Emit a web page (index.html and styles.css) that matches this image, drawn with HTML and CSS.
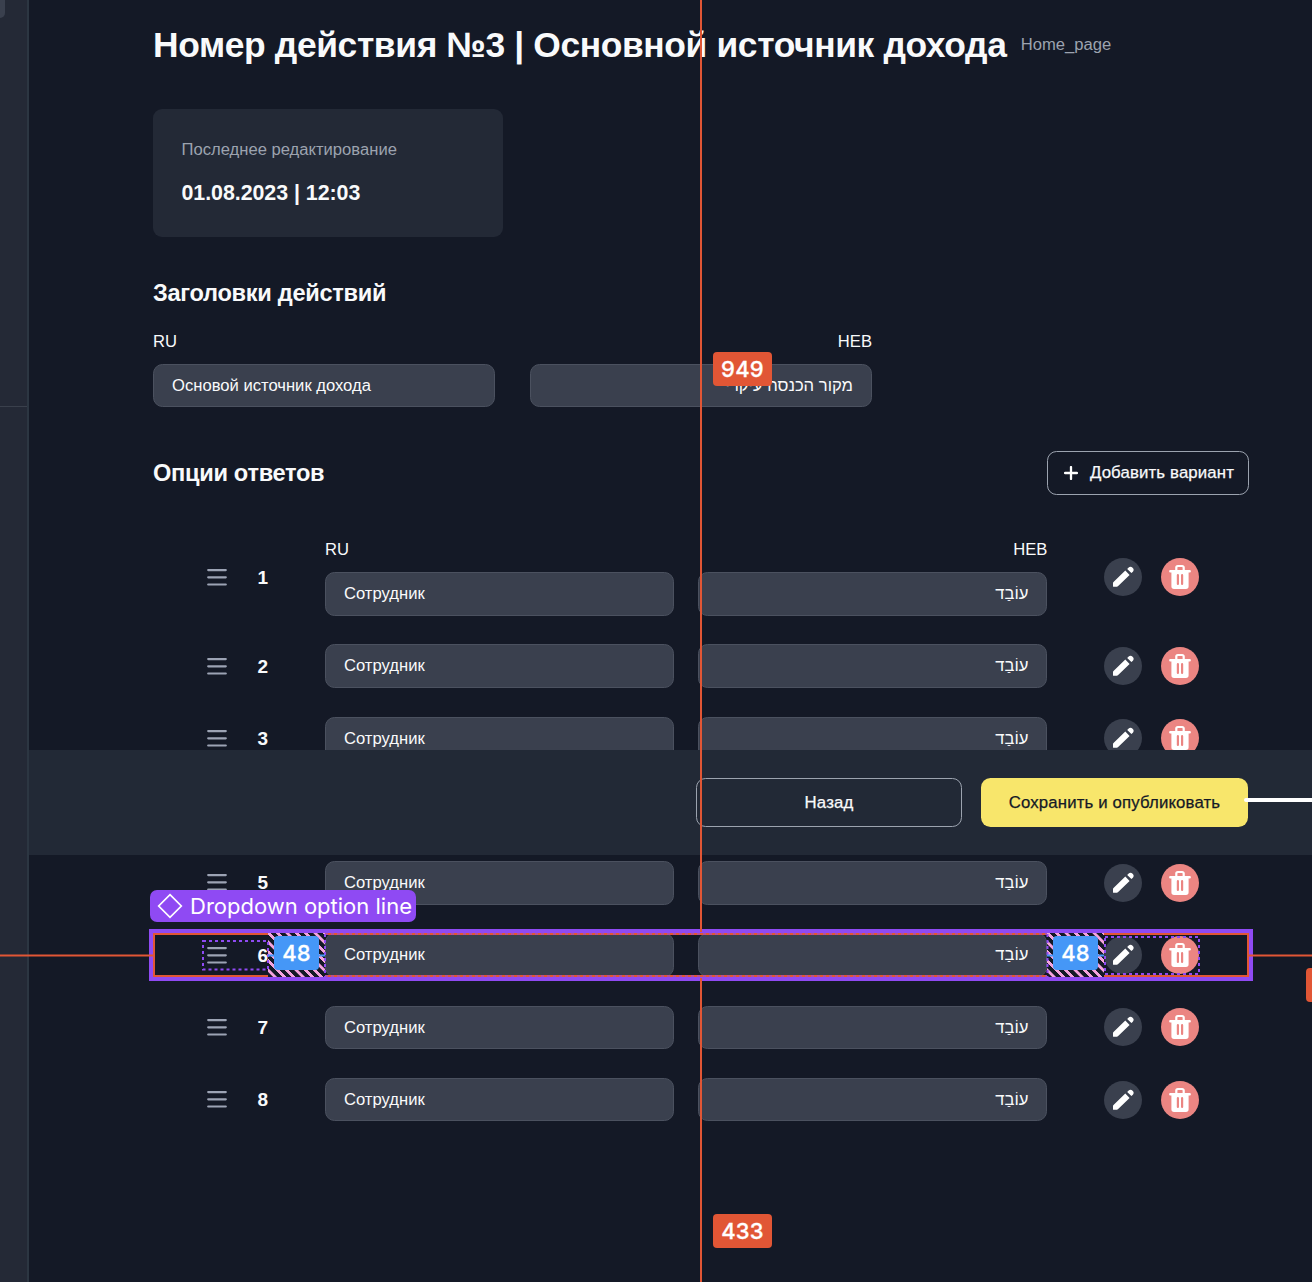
FILE: index.html
```html
<!DOCTYPE html>
<html lang="ru">
<head>
<meta charset="utf-8">
<title>Номер действия №3</title>
<link rel="stylesheet" href="styles.css">
</head>
<body>
<svg class="sprite" width="0" height="0" aria-hidden="true">
  <symbol id="drag" viewBox="0 0 29 29"><path d="M6.200 7.100H23.800M6.200 14.300H23.800M6.200 21.500H23.800" fill="none" stroke="#9ca3b4" stroke-width="2.2" stroke-linecap="round"/></symbol>
  <symbol id="pencil" viewBox="0 0 38 38"><path d="M9 25.100a1.600 1.600 0 0 1 .5-1.100L21.300 12.600l4.300 4.300L13.900 28.300a1.600 1.600 0 0 1-1.100.5H9.600a.6.6 0 0 1-.6-.6zM23.200 10.900l1.200-1.200a2.950 2.950 0 0 1 4.200 4.200l-1.200 1.200z" fill="#fff"/></symbol>
  <symbol id="trash" viewBox="0 0 38 38"><path d="M15.300 12.500V9.500A1.500 1.500 0 0 1 16.800 8h4.400a1.500 1.500 0 0 1 1.500 1.500v3" fill="none" stroke="#fff" stroke-width="2.200"/><path d="M9.300 12H28.700a1.200 1.200 0 0 1 0 2.400h-1.100V28.300A2.700 2.700 0 0 1 24.900 31H13.100a2.700 2.700 0 0 1-2.700-2.700V14.400H9.300a1.200 1.200 0 0 1 0-2.400z" fill="#fff"/><path d="M16.900 17.200V26M21.100 17.200V26" stroke="#eb8582" stroke-width="2.200" stroke-linecap="round"/></symbol>
</svg>
<div class="app">
  <aside class="sidebar">
    <div class="sidebar-top"><div class="sidebar-chip"></div></div>
  </aside>
  <main class="main">
    <header class="title-row">
      <h1>Номер действия №3 | Основной источник дохода</h1>
      <span class="page-name">Home_page</span>
    </header>
    <section class="card">
      <p class="card-label">Последнее редактирование</p>
      <p class="card-date">01.08.2023 | 12:03</p>
    </section>
    <h2 class="section-title">Заголовки действий</h2>
    <div class="headings">
      <label class="field"><span class="label">RU</span><span class="input">Основой источник дохода</span></label>
      <label class="field heb"><span class="label">HEB</span><span class="input"><bdi>מקור הכנסה עיקרי</bdi></span></label>
    </div>
    <div class="options-head">
      <h2>Опции ответов</h2>
      <button class="btn add"><svg width="14" height="14" viewBox="0 0 14 14"><path d="M7 1.100V12.900M1.100 7H12.900" stroke="#fff" stroke-width="2.3" stroke-linecap="round"/></svg>Добавить вариант</button>
    </div>
    <div class="options">
      <div class="option">
        <div class="handle"><svg class="drag"><use href="#drag"/></svg><b>1</b></div>
        <div class="pair">
          <label class="field"><span class="label">RU</span><span class="input">Сотрудник</span></label>
          <label class="field heb"><span class="label">HEB</span><span class="input"><bdi>עוֹבַד</bdi></span></label>
        </div>
        <div class="actions"><button class="round"><svg><use href="#pencil"/></svg></button><button class="round danger"><svg><use href="#trash"/></svg></button></div>
      </div>
      <div class="option">
        <div class="handle"><svg class="drag"><use href="#drag"/></svg><b>2</b></div>
        <div class="pair"><span class="input">Сотрудник</span><span class="input heb"><bdi>עוֹבַד</bdi></span></div>
        <div class="actions"><button class="round"><svg><use href="#pencil"/></svg></button><button class="round danger"><svg><use href="#trash"/></svg></button></div>
      </div>
      <div class="option">
        <div class="handle"><svg class="drag"><use href="#drag"/></svg><b>3</b></div>
        <div class="pair"><span class="input">Сотрудник</span><span class="input heb"><bdi>עוֹבַד</bdi></span></div>
        <div class="actions"><button class="round"><svg><use href="#pencil"/></svg></button><button class="round danger"><svg><use href="#trash"/></svg></button></div>
      </div>
      <div class="option covered"></div>
      <div class="option">
        <div class="handle"><svg class="drag"><use href="#drag"/></svg><b>5</b></div>
        <div class="pair"><span class="input">Сотрудник</span><span class="input heb"><bdi>עוֹבַד</bdi></span></div>
        <div class="actions"><button class="round"><svg><use href="#pencil"/></svg></button><button class="round danger"><svg><use href="#trash"/></svg></button></div>
      </div>
      <div class="option">
        <div class="handle"><svg class="drag"><use href="#drag"/></svg><b>6</b></div>
        <div class="pair"><span class="input">Сотрудник</span><span class="input heb"><bdi>עוֹבַד</bdi></span></div>
        <div class="actions"><button class="round"><svg><use href="#pencil"/></svg></button><button class="round danger"><svg><use href="#trash"/></svg></button></div>
      </div>
      <div class="option">
        <div class="handle"><svg class="drag"><use href="#drag"/></svg><b>7</b></div>
        <div class="pair"><span class="input">Сотрудник</span><span class="input heb"><bdi>עוֹבַד</bdi></span></div>
        <div class="actions"><button class="round"><svg><use href="#pencil"/></svg></button><button class="round danger"><svg><use href="#trash"/></svg></button></div>
      </div>
      <div class="option">
        <div class="handle"><svg class="drag"><use href="#drag"/></svg><b>8</b></div>
        <div class="pair"><span class="input">Сотрудник</span><span class="input heb"><bdi>עוֹבַד</bdi></span></div>
        <div class="actions"><button class="round"><svg><use href="#pencil"/></svg></button><button class="round danger"><svg><use href="#trash"/></svg></button></div>
      </div>
    </div>
  </main>
  <footer class="savebar">
    <button class="btn back">Назад</button>
    <button class="btn save">Сохранить и опубликовать</button>
  </footer>
  <div class="connector"></div>
  <div class="selection"></div>
  <div class="gap-hatch gap-left"></div>
  <div class="gap-hatch gap-right"></div>
  <svg class="guides" width="1312" height="1282" viewBox="0 0 1312 1282" fill="none">
    <g stroke="#8f4af3" stroke-width="2" stroke-dasharray="3 3">
      <rect x="203" y="941" width="65" height="28.5"/>
      <rect x="1105" y="937" width="94" height="37"/>
      <path d="M325 934H1047M325 976H1047" stroke-width="1.2"/>
      <path d="M325 934V977M1047.500 934V977"/>
    </g>
    <path d="M701 0V932M701 978V1282M0 955.500H153M1249 955.500H1312" stroke="#e15635" stroke-width="2"/>
    <path d="M268 955.500H325M1047 955.500H1104" stroke="#4597f7" stroke-width="2"/>
  </svg>
  <div class="tag tag-949">949</div>
  <div class="tag tag-433">433</div>
  <div class="tag tag-edge"></div>
  <div class="tag blue tag-left">48</div>
  <div class="tag blue tag-right">48</div>
  <div class="component-name"><svg width="26" height="26" viewBox="0 0 26 26"><path d="M13 1.700L24.300 13L13 24.300L1.700 13Z" fill="none" stroke="#fff" stroke-width="1.700"/></svg>Dropdown option line</div>
</div>
</body>
</html>
```

FILE: styles.css
```css
* { box-sizing: border-box; }
body { margin: 0; background: #141926; color: #f9fafb; font-family: "Liberation Sans", Arial, sans-serif; font-size: 16.620px; }
h1, h2, p { margin: 0; }
button { font: inherit; color: inherit; padding: 0; border: 0; background: none; }
.sprite { position: absolute; }
.app { position: relative; display: flex; width: 1312px; height: 1282px; overflow: hidden; }
.sidebar { width: 29px; flex: none; background: #242936; border-right: 2px solid #2c3642; }
.sidebar-top { height: 407px; border-bottom: 1px solid #3a404c; }
.sidebar-chip { width: 5px; height: 18px; background: #3a404e; border-radius: 0 0 5px 0; }
.main { width: 1220px; padding: 21px 0 0 124px; flex: none; }
.title-row { display: flex; align-items: center; gap: 14.300px; height: 48px; }
h1 { font-size: 35.400px; font-weight: 700; line-height: 48px; letter-spacing: -.37px; white-space: nowrap; }
.page-name { color: #9ca3af; line-height: 24px; }
.card { width: 350px; height: 128px; margin-top: 40px; padding: 29px 28.500px; background: #232936; border-radius: 9px; display: flex; flex-direction: column; gap: 16px; }
.card-label { color: #9ca3af; line-height: 24px; }
.card-date { font-size: 21.400px; font-weight: 700; line-height: 30px; letter-spacing: -.05px; }
h2 { font-size: 23.600px; font-weight: 700; line-height: 32px; letter-spacing: -.3px; }
.section-title { margin-top: 40px; }
.headings { display: grid; grid-template-columns: 342px 342px; column-gap: 35px; margin-top: 20.500px; }
.field { display: flex; flex-direction: column; gap: 10px; }
.label { line-height: 24px; }
.field.heb .label { text-align: right; }
.input { display: block; height: 43.500px; padding: 0 18px; line-height: 42px; background: #3a404e; border: 1px solid #4b515f; border-radius: 9.500px; }
.heb .input, .input.heb { text-align: right; }
.options-head { display: flex; justify-content: space-between; align-items: center; width: 1096px; margin-top: 44px; }
.btn { display: flex; align-items: center; justify-content: center; border: 1.200px solid #9ca3af; border-radius: 9.500px; font-size: 16.800px; letter-spacing: .14px; -webkit-text-stroke: .25px; }
.add { width: 202px; height: 44px; gap: 12px; padding-left: 2px; }
.options { display: flex; flex-direction: column; gap: 28.900px; margin-top: 43.500px; width: 1096px; }
.option { display: flex; align-items: center; height: 43.360px; padding-left: 49px; }
.option:first-child { height: 77px; }
.handle { display: flex; align-items: center; justify-content: space-between; width: 66px; margin-right: 57px; }
.handle b { font-size: 19px; font-weight: 700; line-height: 28px; padding-top: 1px; }
.drag { width: 29px; height: 29px; display: block; }
.pair { display: grid; grid-template-columns: 349px 349px; column-gap: 24.400px; margin-right: 57px; }
.actions { display: flex; gap: 19px; }
.round { width: 38px; height: 38px; border-radius: 50%; background: #3a404e; }
.round svg { display: block; width: 38px; height: 38px; }
.danger { background: #eb8582; }
.savebar { position: absolute; left: 29px; right: 0; top: 750px; height: 105px; padding-right: 64px; display: flex; align-items: center; justify-content: flex-end; gap: 19px; background: #222936; }
.back { width: 266px; height: 49px; }
.save { width: 267px; height: 49px; background: #f8e66b; border: 0; color: #141926; }
.connector { position: absolute; left: 1244px; top: 798px; width: 80px; height: 4px; border-radius: 2px; background: #fff; }
.selection { position: absolute; left: 149px; top: 929px; width: 1104px; height: 52px; border: 4px solid #8f4af3; }
.selection::before { content: ""; box-sizing: border-box; display: block; height: 44px; border: 2px solid #e15635; }
.gap-hatch { position: absolute; top: 933px; width: 57px; height: 44px; background: repeating-linear-gradient(45deg, #141926 0 3.400px, #f5a3dd 3.800px 6.200px, #141926 6.600px); }
.gap-left { left: 268px; }
.gap-right { left: 1047px; }
.guides { position: absolute; left: 0; top: 0; }
.tag { position: absolute; height: 34px; width: 59px; border-radius: 4px; background: #e15635; color: #fff; font: 500 22px/35px "Inter", "Roboto", sans-serif; letter-spacing: .2px; -webkit-text-stroke: .3px; text-align: center; }
.tag-949 { left: 713px; top: 352px; }
.tag-433 { left: 713px; top: 1214px; }
.tag-edge { left: 1306px; top: 968px; }
.blue { width: 45px; background: #4597f7; }
.tag-left { left: 274px; top: 936px; }
.tag-right { left: 1053px; top: 936px; }
.component-name { position: absolute; left: 150px; top: 890px; width: 266px; height: 32px; padding-left: 7px; display: flex; align-items: center; gap: 7px; border-radius: 7px; background: #8f4af3; color: #fff; font: 400 22px/32px "Inter", "Roboto", sans-serif; white-space: nowrap; }
```
